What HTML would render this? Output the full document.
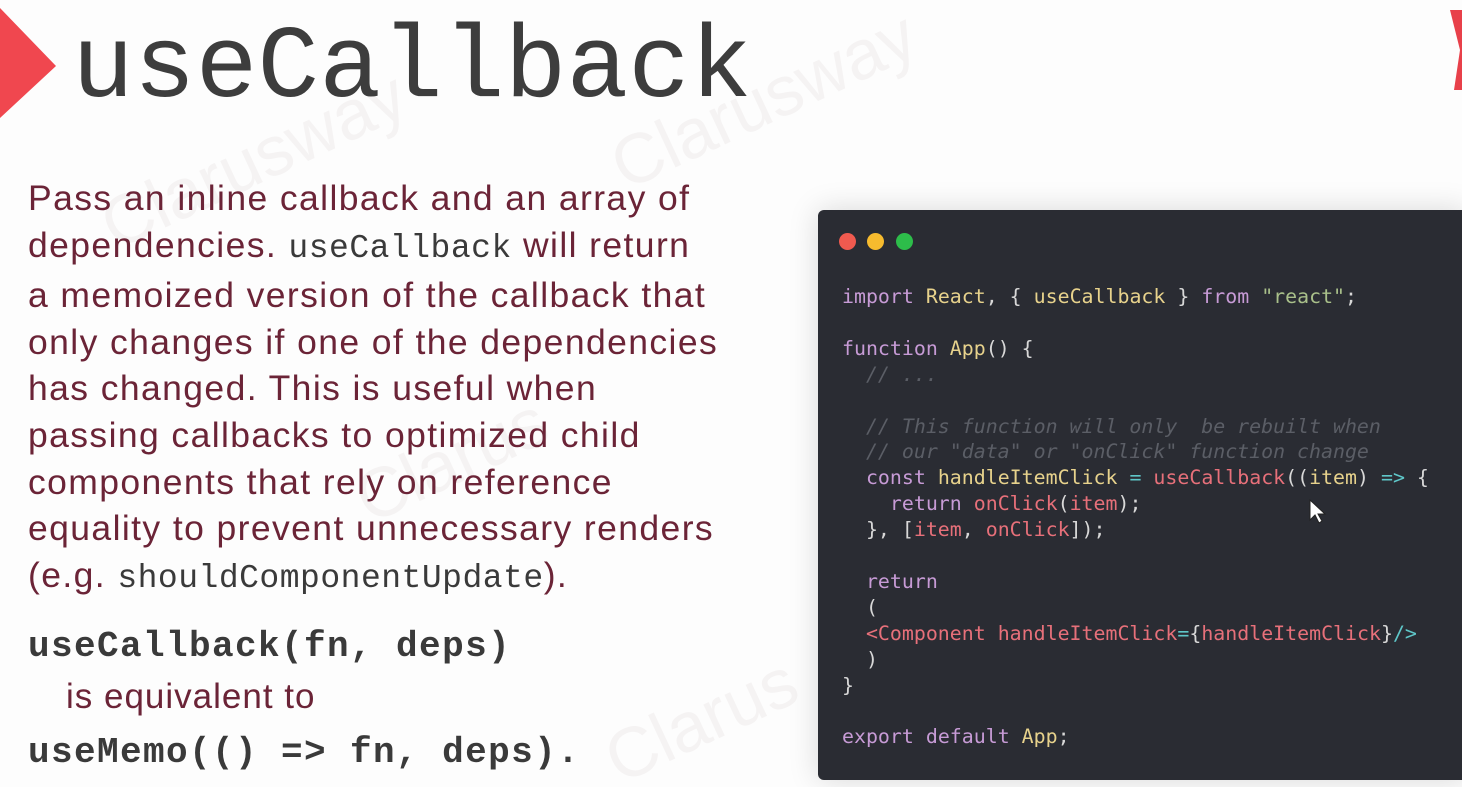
<!DOCTYPE html>
<html><head><meta charset="utf-8"><style>
html,body{margin:0;padding:0;width:1462px;height:787px;overflow:hidden;background:#fdfdfd;position:relative;font-family:"Liberation Sans",sans-serif}
.wm{position:absolute;color:#f5f3f3;font-size:70px;transform:rotate(-25deg);font-family:"Liberation Sans",sans-serif}
.title{position:absolute;left:72px;top:14px;font-family:"Liberation Mono",monospace;font-size:103px;color:#3d3d3d;line-height:110px}
.body{position:absolute;left:28px;top:175px;width:760px;font-size:35.5px;line-height:46.6px;color:#6b2437;letter-spacing:1.4px;white-space:nowrap}
.body code{font-family:"Liberation Mono",monospace;color:#3a3a3a;font-size:33px;letter-spacing:0.5px}
.sig{position:absolute;left:28px;font-family:"Liberation Mono",monospace;font-weight:bold;font-size:36px;letter-spacing:1.4px;color:#3a3a3a}
.box{position:absolute;left:818px;top:210px;width:650px;height:570px;background:#2a2c33;border-radius:6px;box-shadow:0 0 30px rgba(0,0,0,.15)}
.dot{position:absolute;top:23px;width:17px;height:17px;border-radius:50%}
pre{position:absolute;left:24px;top:74px;margin:0;font-family:"DejaVu Sans Mono","Liberation Mono",monospace;font-size:19.9px;line-height:25.9px;color:#d8d8d8}
.k{color:#c79bd6}.y{color:#e7d28c}.s{color:#a9c08a}.c{color:#5b5e66;font-style:italic}.r{color:#e7707a}.t{color:#5fc7c9}
</style></head><body>
<div class="wm" style="left:90px;top:120px">Clarusway</div>
<div class="wm" style="left:600px;top:60px">Clarusway</div>
<div class="wm" style="left:350px;top:420px">Clarus</div>
<div class="wm" style="left:600px;top:680px">Clarus</div>
<svg style="position:absolute;left:0;top:8px" width="60" height="110"><polygon points="0,0 56,58 0,110" fill="#f0474f"/></svg>
<svg style="position:absolute;left:1450px;top:10px" width="12" height="80"><polygon points="0,0 12,0 12,80 4,80 10,40" fill="#e8404a"/></svg>
<div class="title">useCallback</div>
<div class="body">Pass an inline callback and an array of<br>dependencies. <code>useCallback</code> will return<br>a memoized version of the callback that<br>only changes if one of the dependencies<br>has changed. This is useful when<br>passing callbacks to optimized child<br>components that rely on reference<br>equality to prevent unnecessary renders<br>(e.g. <code>shouldComponentUpdate</code>).</div>
<div class="sig" style="top:626px">useCallback(fn, deps)</div>
<div style="position:absolute;left:66px;top:677px;font-size:35px;letter-spacing:1px;color:#6b2437">is equivalent to</div>
<div class="sig" style="top:732px">useMemo(() =&gt; fn, deps).</div>
<div class="box">
<div class="dot" style="left:21px;background:#f05a4f"></div>
<div class="dot" style="left:49px;background:#f7bb2e"></div>
<div class="dot" style="left:78px;background:#2dbd4a"></div>
<pre><span class="k">import</span> <span class="y">React</span>, { <span class="y">useCallback</span> } <span class="k">from</span> <span class="s">"react"</span>;

<span class="k">function</span> <span class="y">App</span>() {
  <span class="c">// ...</span>

  <span class="c">// This function will only  be rebuilt when</span>
  <span class="c">// our "data" or "onClick" function change</span>
  <span class="k">const</span> <span class="y">handleItemClick</span> <span class="t">=</span> <span class="r">useCallback</span>((<span class="y">item</span>) <span class="t">=&gt;</span> {
    <span class="k">return</span> <span class="r">onClick</span>(<span class="r">item</span>);
  }, [<span class="r">item</span>, <span class="r">onClick</span>]);

  <span class="k">return</span>
  (
  <span class="r">&lt;Component</span> <span class="r">handleItemClick</span><span class="t">=</span>{<span class="r">handleItemClick</span>}<span class="t">/&gt;</span>
  )
}

<span class="k">export</span> <span class="k">default</span> <span class="y">App</span>;</pre>
<svg style="position:absolute;left:490px;top:288px" width="20" height="26"><path d="M2 2 L2 22 L7 17 L11 25 L14 23 L10 16 L17 16 Z" fill="#fff" stroke="#222" stroke-width="1"/></svg>
</div>
</body></html>
